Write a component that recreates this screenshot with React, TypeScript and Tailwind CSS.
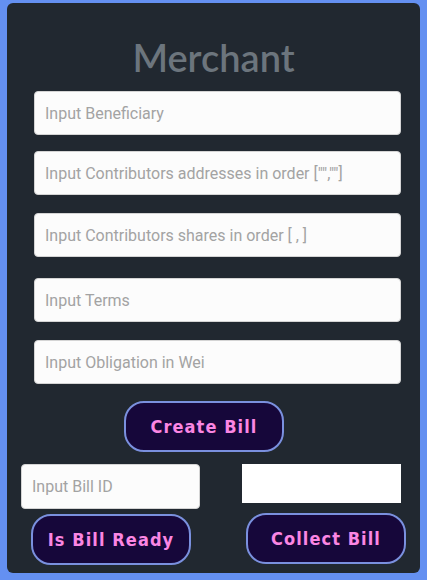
import React from "react";

const inputCls =
  "block h-[44px] w-[367px] ml-[27px] rounded-[4px] border border-[#d4d4d4] bg-[#fcfcfc] px-[10px] text-[16px] text-[#555] placeholder:text-[#a3a3a3] outline-none";

const btnCls =
  "w-[160px] h-[51px] rounded-[20px] border-2 border-[#7a90de] bg-[#16073a] text-[#fb86e3] text-[18px] font-bold tracking-[0.06em]";

const btnFont = { fontFamily: "'DejaVu Sans Condensed', 'DejaVu Sans', Verdana, sans-serif" };

export default function App() {
  return (
    <div className="min-h-[580px] w-[427px] bg-[#6490f1] pt-[3px] pl-[7px]">
      <div className="w-[413px] h-[570px] rounded-[6px] bg-[#212830] pt-[30px] flex flex-col">
        <h1
          className="text-center text-[38px] leading-[48px] text-[#6c757d] font-semibold"
          style={{ fontFamily: "Lato, 'Open Sans', sans-serif" }}
        >
          Merchant
        </h1>
        <div className="flex flex-col" style={{ fontFamily: "Roboto, 'Liberation Sans', sans-serif" }}>
          <input className={inputCls + " mt-[10px]"} placeholder="Input Beneficiary" />
          <input className={inputCls + " mt-[16px]"} placeholder='Input Contributors addresses in order ["",""]' />
          <input className={inputCls + " mt-[18px]"} placeholder="Input Contributors shares in order [ , ]" />
          <input className={inputCls + " mt-[21px]"} placeholder="Input Terms" />
          <input className={inputCls + " mt-[18px]"} placeholder="Input Obligation in Wei" />
        </div>
        <div style={btnFont}>
          <button className={btnCls + " mt-[17px] ml-[117px] h-[50px]"}>Create Bill</button>
        </div>
        <div className="flex mt-[12px]">
          <div className="ml-[14px] flex flex-col">
            <input
              className="h-[45px] w-[179px] rounded-[4px] border border-[#d4d4d4] bg-[#fcfcfc] px-[10px] text-[16px] placeholder:text-[#a3a3a3] outline-none"
              style={{ fontFamily: "Roboto, 'Liberation Sans', sans-serif" }}
              placeholder="Input Bill ID"
            />
            <button className={btnCls + " mt-[5px] ml-[10px]"} style={btnFont}>
              Is Bill Ready
            </button>
          </div>
          <div className="ml-[42px] flex flex-col">
            <div className="h-[39px] w-[159px] bg-white" />
            <button className={btnCls + " mt-[10px] ml-[4px]"} style={btnFont}>
              Collect Bill
            </button>
          </div>
        </div>
      </div>
    </div>
  );
}
